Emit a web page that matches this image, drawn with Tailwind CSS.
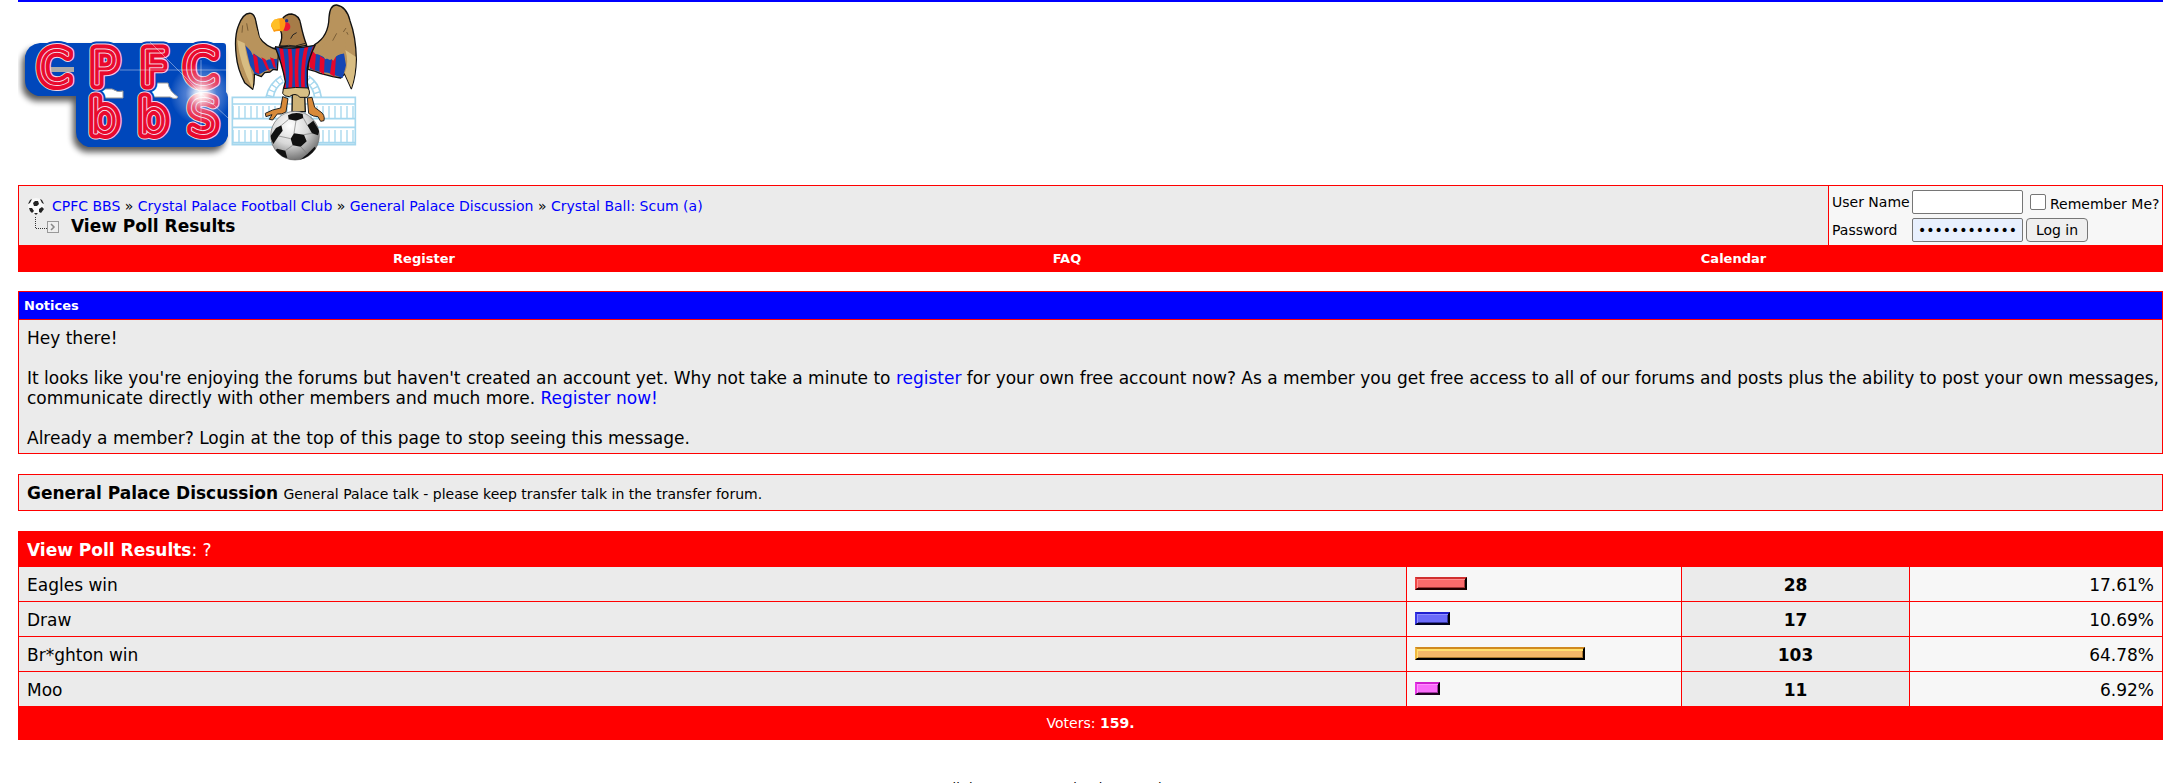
<!DOCTYPE html>
<html lang="en">
<head>
    <meta charset="UTF-8">
    <meta name="viewport" content="width=device-width, initial-scale=1.0">
    <title>CPFC BBS - View Poll Results</title>
    <script src="https://cdn.jsdelivr.net/npm/@tailwindcss/browser@4"></script>
</head>
<body class="bg-white text-black font-['Verdana','DejaVu_Sans',sans-serif] text-[17px] leading-5 h-screen overflow-hidden">
<div class="pl-[18px] pr-[19px]">

    <!-- logo -->
    <header class="border-t-2 border-[#0000ff] h-[185px]">
        <a href="#" class="inline-block">
            <svg class="block" width="345" height="168" viewBox="18 2 345 168" role="img" aria-label="CPFC BBS">
                <defs>
                    <filter id="soft" x="-10%" y="-10%" width="120%" height="130%"><feGaussianBlur stdDeviation="3"/></filter>
                    <radialGradient id="flare">
                        <stop offset="0" stop-color="#fff"/>
                        <stop offset=".2" stop-color="#fff" stop-opacity=".8"/>
                        <stop offset=".5" stop-color="#dde4ff" stop-opacity=".35"/>
                        <stop offset="1" stop-color="#fff" stop-opacity="0"/>
                    </radialGradient>
                    <radialGradient id="ball" cx=".4" cy=".3" r=".75">
                        <stop offset="0" stop-color="#fff"/>
                        <stop offset=".5" stop-color="#d8d8d8"/>
                        <stop offset="1" stop-color="#666"/>
                    </radialGradient>
                    <clipPath id="ballClip"><circle cx="225" cy="407" r="73"/></clipPath>
                    <clipPath id="shirtClip"><path d="M165 140Q190 146 220 144Q250 142 285 136Q268 170 262 205V252L266 268Q240 262 190 268L196 245Q186 190 165 140Z"/></clipPath>
                    <g id="word" font-family="DejaVu Sans" font-weight="200" font-size="46" text-anchor="middle" stroke-linejoin="round" stroke-linecap="round">
                        <text x="54 104 154 200" y="84">CPFC</text>
                        <text x="104 153 203" y="133">bbS</text>
                    </g>
                    <path id="plate" d="M40 43H223Q226 43 226 46V92Q228 94 228 97V136Q225 147 214 147H88Q76 143 76 132V96H38Q25 92 25 80V56Q28 44 40 43Z"/>
                </defs>

                <use href="#plate" x="-3" y="5" fill="#000" opacity=".65" filter="url(#soft)"/>
                <use href="#plate" fill="#0047bb"/>
                <path d="M98 89Q97 94 98 98H123V91Q118 93 112 89ZM149 83Q146 90 148 97H170Q176 100 178 97Q169 91 168 83Z" fill="#fff" stroke="#999" stroke-width="1"/>
                <use href="#word" fill="#0047bb" stroke="#0047bb" stroke-width="17"/>
                <path d="M50 67H74V72H50Z" fill="#aaa"/>
                <use href="#word" fill="#fff" stroke="#f4d5e4" stroke-width="13"/>
                <use href="#word" fill="#e9092d" stroke="#e9092d" stroke-width="11"/>
                <use href="#word" fill="#f4d5e4" stroke="#f4d5e4" stroke-width="3"/>
                <use href="#word" fill="#e9092d" stroke="#e9092d" stroke-width="1"/>
                <path d="M150 42L201 93L228 118M120 70H228M201 60V130" fill="none" stroke="#fff" stroke-opacity=".4"/>
                <circle cx="201" cy="94" r="31" fill="url(#flare)"/>

                <!-- eagle, drawn on a grid three times as fine -->
                <g transform="translate(220 0) scale(.33333)">
                    <g fill="none" stroke="#a5d7ee" stroke-width="5">
                        <path d="M37 292H406V434H37ZM37 312H406M37 356H406M37 382H406M37 428H406"/>
                        <path d="M37 336H406M37 408H406" stroke-width="36" stroke-dasharray="4 14"/>
                        <path d="M138 292Q146 250 184 228M160 292Q164 262 190 246M266 228Q298 248 304 292M258 246Q280 262 284 292"/>
                        <path d="M149 290Q158 254 186 236M263 238Q288 256 294 290" stroke-width="18" stroke-dasharray="4 12"/>
                    </g>
                    <g stroke="#111" stroke-width="4" stroke-linejoin="round">
                        <path d="M217 282L216 335H256L254 282Z" fill="#cdb277"/>
                        <path d="M93 40Q70 36 55 78Q42 112 49 168Q52 206 74 248L98 268Q104 250 103 222L124 230L134 218L150 216L160 208L172 210L176 150Q136 140 118 112L108 66Q105 44 93 40Z" fill="#b8935c"/>
                        <path d="M350 15Q330 14 327 52Q326 110 284 134L268 150L264 208L286 214L300 220L324 226L338 230L362 234L374 222L394 266Q408 228 409 178Q408 110 390 62Q380 20 350 15Z" fill="#b8935c"/>
                    </g>
                    <path d="M76 136L100 160L130 180L172 176L170 206L150 206L134 214L116 224L104 222L90 196Z" fill="#1546b4"/>
                    <path d="M98 158L112 172L118 222L106 216ZM124 172L136 178L150 214L140 208ZM150 172L162 176L168 206L160 200Z" fill="#e5072c"/>
                    <path d="M270 148L300 166L330 180L360 162L372 160L378 196L368 234L344 226L324 218L300 216L270 206Z" fill="#1546b4"/>
                    <path d="M268 146L288 160L284 212L268 200ZM300 168L314 176L312 224L298 214ZM336 178L348 170L344 230L330 222Z" fill="#e5072c"/>
                    <path d="M76 136Q92 148 98 166L106 152L118 172L124 160L140 182L150 170L170 178L160 150Q130 146 116 108Q108 70 90 60Z" fill="#b8935c"/>
                    <path d="M372 160L350 166L340 182L328 172L316 178L306 164L286 162L276 150Q320 140 340 110Q360 90 378 130Z" fill="#b8935c"/>
                    <path d="M52 120Q58 190 98 266Q102 236 90 200Q76 160 74 130ZM376 150Q388 190 374 220L394 264Q408 220 407 170Z" fill="#d8bd82"/>
                    <path d="M68 76L66 98M80 70L84 92M350 100L338 122M378 84L370 96M380 96L384 104" stroke="#5b4322" stroke-width="2" fill="none"/>
                    <g clip-path="url(#shirtClip)">
                        <path d="M160 130H290V275H160Z" fill="#1546b4"/>
                        <path d="M182 136Q194 200 192 275M208 136Q216 200 210 275M234 136Q226 200 232 275M262 132Q244 190 250 275M288 132Q268 170 266 240" fill="none" stroke="#e5072c" stroke-width="11"/>
                    </g>
                    <path d="M165 140Q190 146 220 144Q250 142 285 136Q268 170 262 205V252L266 268M190 268L196 245Q186 190 165 140" fill="none" stroke="#111" stroke-width="4"/>
                    <path d="M190 266Q226 260 264 264Q274 280 262 292H240Q226 276 208 290Q192 290 188 280Z" fill="#d9c085" stroke="#111" stroke-width="3"/>
                    <path d="M178 138Q190 110 182 92L186 58Q196 42 215 42Q238 46 242 72Q250 110 260 136Q220 144 178 138Z" fill="#a67c48" stroke="#111" stroke-width="4"/>
                    <path d="M180 139L206 136L226 138L256 130M212 116Q216 102 230 98" fill="none" stroke="#222" stroke-width="3"/>
                    <circle cx="198" cy="80" r="13" fill="#ea1733"/>
                    <path d="M188 54Q156 54 153 78L162 96Q168 92 188 94Q198 80 196 62Z" fill="#fb9a12"/>
                    <path d="M164 58Q154 66 154 78L162 90L180 86L178 58Z" fill="#ffbf26"/>
                    <circle cx="200" cy="62" r="5" fill="#24348e"/>
                    <g fill="#d98a3a" stroke="#222" stroke-width="3" stroke-linejoin="round">
                        <path d="M188 290L204 296L198 336Q186 344 172 342L158 360L148 358L156 344L138 350L136 340L158 330L182 324Z"/>
                        <path d="M262 294L276 292L284 322L300 334Q316 344 312 362L302 364L294 350L280 348L266 340Z"/>
                    </g>
                    <circle cx="225" cy="407" r="73" fill="url(#ball)" stroke="#666" stroke-width="2"/>
                    <g clip-path="url(#ballClip)">
                        <path d="M222 400L252 404L260 424L242 440L218 436L212 416ZM204 346Q224 334 248 342L250 354L228 362L206 358ZM262 376L280 362L298 392L294 406L276 400ZM168 384L184 376L188 392L176 408L160 432L150 410ZM172 446L196 452L202 474L180 470L164 452ZM262 462L284 440L292 452L262 484L240 480Z" fill="#111"/>
                        <path d="M228 362L222 400M252 404L276 400M242 440L262 462M218 436L196 452M212 416L176 408M206 358L184 376M250 354L262 376" stroke="#777" stroke-width="2" fill="none"/>
                    </g>
                </g>
            </svg>
        </a>
    </header>

    <!-- breadcrumb and login -->
    <div class="flex border border-b-0 border-[#ff0000] bg-[#ebebeb] text-sm leading-5 h-[60px]">
        <div class="flex-1 px-2 pt-[10px]">
            <div class="flex items-center gap-[7px]">
                <svg width="18" height="18" viewBox="0 0 18 18">
                    <circle cx="9" cy="9" r="8" fill="#f8f8f8"/>
                    <path d="M6 6L8 4H11L12 7L10 9H7ZM1 7L3 3L5 2L3 6ZM13 2L15 3L17 7L15 6ZM2 11L5 11L7 14L5 16L3 14ZM12 12L15 10L17 12L14 16L12 15ZM7 16H11L9 18Z" fill="#222"/>
                </svg>
                <nav>
                    <a href="#" class="text-[#0000ff]">CPFC BBS</a> &raquo;
                    <a href="#" class="text-[#0000ff]">Crystal Palace Football Club</a> &raquo;
                    <a href="#" class="text-[#0000ff]">General Palace Discussion</a> &raquo;
                    <a href="#" class="text-[#0000ff]">Crystal Ball: Scum (a)</a>
                </nav>
            </div>
            <div class="flex items-center gap-3 pl-2">
                <svg width="24" height="18" viewBox="0 0 24 18" fill="none">
                    <path d="M.5 0V11.500H12" stroke="#333" stroke-dasharray="1 1"/>
                    <rect x="12.500" y="4.500" width="11" height="11" stroke="#999" fill="#eee"/>
                    <path d="M16 7L19 10L16 13" stroke="#888" stroke-width="1.500"/>
                </svg>
                <h1 class="text-[17px] leading-5 font-bold">View Poll Results</h1>
            </div>
        </div>
        <form class="grid grid-cols-[76px_110px_auto] gap-x-1 gap-y-1 content-center items-center whitespace-nowrap border-l border-[#ff0000] bg-[#f7f7f7] pl-[3px] w-[334px]">
            <label for="username">User Name</label>
            <input id="username" type="text" class="w-[111px] h-6 px-1 bg-white border border-[#767676] rounded-xs">
            <div class="flex items-center gap-1 pl-1">
                <input id="remember" type="checkbox" class="size-4 appearance-none bg-white border border-[#767676] rounded-xs">
                <label for="remember" class="pt-1">Remember Me?</label>
            </div>
            <label for="password">Password</label>
            <input id="password" type="password" value="palacepalace1905" class="w-[111px] h-6 px-[5px] text-sm bg-[#e8f0fe] border border-[#767676] rounded-xs">
            <button type="button" class="w-[62px] h-6 bg-[#efefef] border border-[#767676] rounded-sm">Log in</button>
        </form>
    </div>
    <nav class="grid grid-cols-[812fr_474fr_859fr] bg-[#ff0000] text-white text-[13px] leading-[26px] pt-px -mb-px font-bold text-center">
        <a href="#">Register</a>
        <a href="#">FAQ</a>
        <a href="#">Calendar</a>
    </nav>

    <!-- notices -->
    <section class="mt-5 border border-[#ff0000] bg-[#ebebeb]">
        <h2 class="bg-[#0000ff] text-white text-[13px] leading-[27px] font-bold px-[5px] border-b border-[#ff0000]">Notices</h2>
        <div class="flex flex-col gap-5 pl-2 pt-2 pb-[5px]">
            <p>Hey there!</p>
            <p>It looks like you're enjoying the forums but haven't created an account yet. Why not take a minute to <a href="#" class="text-[#0000ff]">register</a> for your own free account now? As a member you get free access to all of our forums and posts plus the ability to post your own messages, communicate directly with other members and much more. <a href="#" class="text-[#0000ff]">Register now!</a></p>
            <p>Already a member? Login at the top of this page to stop seeing this message.</p>
        </div>
    </section>

    <!-- forum title -->
    <div class="mt-5 border border-[#ff0000] bg-[#ebebeb] px-2 pt-2 pb-[6px]">
        <strong>General Palace Discussion</strong>
        <span class="text-sm leading-5">General Palace talk - please keep transfer talk in the transfer forum.</span>
    </div>

    <!-- poll -->
    <table class="mt-5 w-full table-fixed border-collapse bg-[#ebebeb] [&_td]:border [&_td]:border-[#ff0000] [&_td]:px-2 [&_td]:pt-[2px] [&_td]:h-[35px]">
        <colgroup>
            <col>
            <col class="w-[275px]">
            <col class="w-[228px]">
            <col class="w-[253px]">
        </colgroup>
        <thead>
            <tr>
                <th colspan="4" class="border border-[#ff0000] bg-[#ff0000] text-white text-left font-normal px-2 pt-[2px] h-[35px]"><strong>View Poll Results</strong>: ?</th>
            </tr>
        </thead>
        <tbody>
            <tr>
                <td>Eagles win</td>
                <td class="bg-[#f7f7f7]"><div class="h-[13px] w-[52px] mb-1 bg-[#f96b6b] border-2 border-t-[#d03030] border-l-[#f04848] border-r-black border-b-[#200000] shadow-[inset_1px_1px_#ff9090,inset_-1px_-1px_#a03535]"></div></td>
                <td class="text-center font-bold">28</td>
                <td class="bg-[#f7f7f7] text-right">17.61%</td>
            </tr>
            <tr>
                <td>Draw</td>
                <td class="bg-[#f7f7f7]"><div class="h-[13px] w-[35px] mb-1 bg-[#6b6bf9] border-2 border-t-[#2020d0] border-l-[#3838e8] border-r-black border-b-[#000020] shadow-[inset_1px_1px_#9090ff,inset_-1px_-1px_#3535a0]"></div></td>
                <td class="text-center font-bold">17</td>
                <td class="bg-[#f7f7f7] text-right">10.69%</td>
            </tr>
            <tr>
                <td>Br*ghton win</td>
                <td class="bg-[#f7f7f7]"><div class="h-[13px] w-[170px] mb-1 bg-[#f5b868] border-2 border-t-[#d08a20] border-l-[#f0b840] border-r-black border-b-black shadow-[inset_1px_2px_#ffe070,inset_-1px_-1px_#a87830]"></div></td>
                <td class="text-center font-bold">103</td>
                <td class="bg-[#f7f7f7] text-right">64.78%</td>
            </tr>
            <tr>
                <td>Moo</td>
                <td class="bg-[#f7f7f7]"><div class="h-[13px] w-[25px] mb-1 bg-[#f96bf9] border-2 border-t-[#d020d0] border-l-[#e838e8] border-r-black border-b-[#200020] shadow-[inset_1px_1px_#ff90ff,inset_-1px_-1px_#a035a0]"></div></td>
                <td class="text-center font-bold">11</td>
                <td class="bg-[#f7f7f7] text-right">6.92%</td>
            </tr>
        </tbody>
        <tfoot>
            <tr>
                <th colspan="4" class="border border-[#ff0000] bg-[#ff0000] text-white text-sm font-normal h-[33px]">Voters: <strong>159.</strong></th>
            </tr>
        </tfoot>
    </table>

    <footer class="mt-[38px] text-center text-[13px] leading-5">
        All times are GMT. The time now is <span class="text-[#ff0000]">05:46 PM</span>.
    </footer>
</div>
</body>
</html>
